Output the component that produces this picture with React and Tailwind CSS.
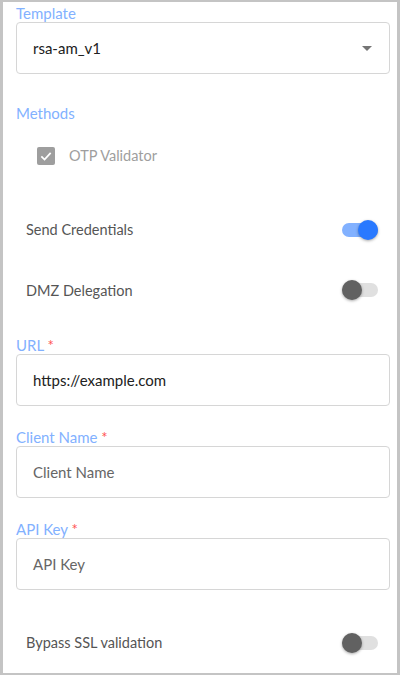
import { useState } from 'react';

function Label({ children, required }) {
  return (
    <div className="text-[15px] leading-[16px] text-[#82b1ff]">
      {children}
      {required && <span className="text-[#ff5252]"> *</span>}
    </div>
  );
}

function Toggle({ on }) {
  return (
    <div className="relative w-[36px] h-[14px] mr-[12px]">
      <div className={`absolute inset-0 rounded-full ${on ? 'bg-[#82b1ff]' : 'bg-[#e0e0e0]'}`} />
      <div
        className={`absolute top-[-3px] w-[20px] h-[20px] rounded-full shadow-[0_1px_3px_rgba(0,0,0,0.35)] ${
          on ? 'left-[16px] bg-[#2979ff]' : 'left-0 bg-[#616161]'
        }`}
      />
    </div>
  );
}

function SwitchRow({ label, on, className }) {
  return (
    <div className={`flex items-center justify-between pl-[10px] ${className}`}>
      <span className="text-[14.5px] text-[#555]">{label}</span>
      <Toggle on={on} />
    </div>
  );
}

function Field({ value, placeholder }) {
  return (
    <div className="h-[52px] rounded-[4px] border border-[#d6d6d6] flex items-center px-[16px] text-[15px]">
      {value ? <span className="text-[#212121]">{value}</span> : <span className="text-[#666]">{placeholder}</span>}
    </div>
  );
}

export default function App() {
  const [tpl] = useState('rsa-am_v1');

  return (
    <div
      className="h-[675px] bg-white border-l-[3px] border-r-[3px] border-t-2 border-b-2 border-[#c4c4c4] pl-[13px] pr-[7px] pt-[3px]"
      style={{ fontFamily: 'Lato, "Noto Sans", sans-serif' }}
    >
      <Label>Template</Label>
      <div className="mt-[1px] h-[52px] rounded-[4px] border border-[#d6d6d6] flex items-center justify-between pl-[16px] pr-[16px] text-[15px] text-[#212121]">
        <span>{tpl}</span>
        <svg width="10" height="5" viewBox="0 0 10 5" className="mr-[1px]">
          <path d="M0 0 L10 0 L5 5 Z" fill="#757575" />
        </svg>
      </div>

      <div className="mt-[31px]">
        <Label>Methods</Label>
      </div>
      <div className="flex items-center mt-[24px] pl-[21px]">
        <div className="w-[18px] h-[18px] rounded-[2px] bg-[#9e9e9e] flex items-center justify-center">
          <svg width="14" height="14" viewBox="0 0 24 24">
            <path d="M4 12.5 L9.5 18 L20 6.5" stroke="white" strokeWidth="3" fill="none" />
          </svg>
        </div>
        <span className="ml-[14px] text-[14.5px] text-[#9e9e9e]">OTP Validator</span>
      </div>

      <SwitchRow label="Send Credentials" on className="mt-[52px]" />
      <SwitchRow label="DMZ Delegation" className="mt-[39px]" />

      <div className="mt-[36px]">
        <Label required>URL</Label>
      </div>
      <div className="mt-[1px]">
        <Field value="https://example.com" />
      </div>

      <div className="mt-[23px]">
        <Label required>Client Name</Label>
      </div>
      <div className="mt-[1px]">
        <Field placeholder="Client Name" />
      </div>

      <div className="mt-[23px]">
        <Label required>API Key</Label>
      </div>
      <div className="mt-[1px]">
        <Field placeholder="API Key" />
      </div>

      <SwitchRow label="Bypass SSL validation" className="mt-[42px]" />
    </div>
  );
}
